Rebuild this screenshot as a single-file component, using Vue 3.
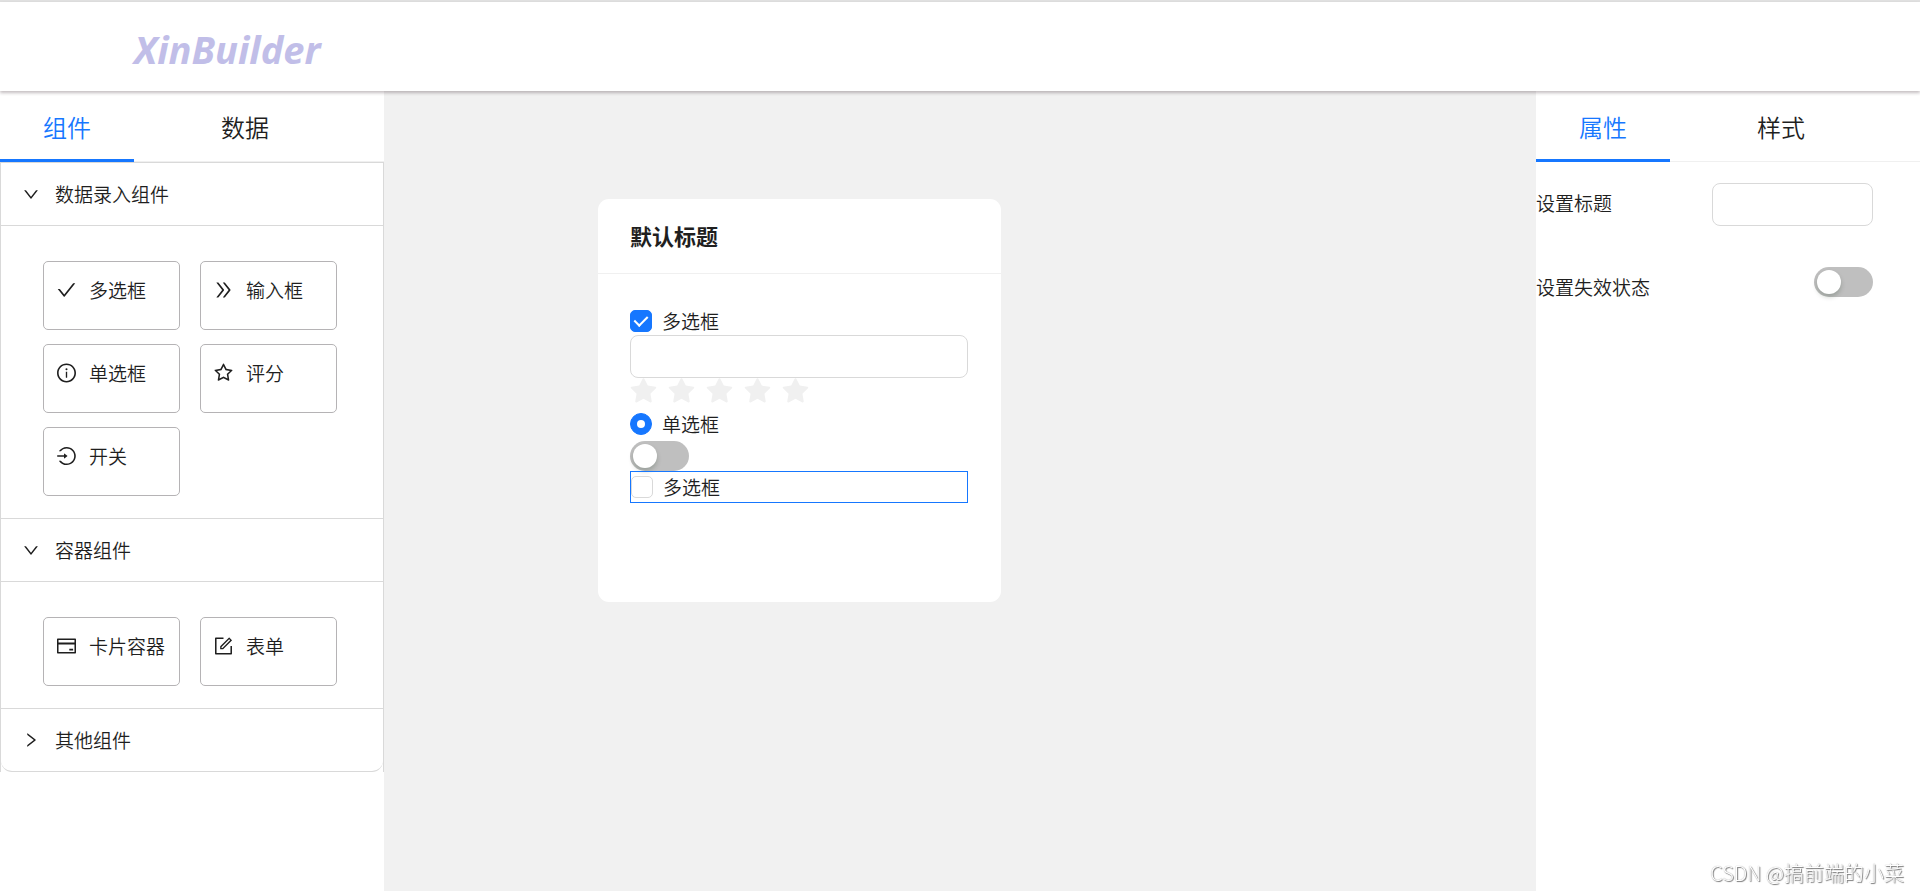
<script setup>
import { ref } from 'vue'

const icons = {
  check: ['M912 190h-69.9c-9.8 0-19.1 4.5-25.1 12.2L404.7 724.5 207 474a32 32 0 00-25.1-12.2H112c-6.7 0-10.4 7.7-6.3 12.9l273.9 347c12.8 16.2 37.4 16.2 50.3 0l488.4-618.9c4.1-5.1.4-12.8-6.3-12.8z'],
  doubleRight: ['M533.2 492.3L277.9 166.1c-3-3.9-7.7-6.1-12.6-6.1H188c-6.7 0-10.4 7.7-6.3 12.9L447.1 512 181.7 851.1A7.98 7.98 0 00188 864h77.3c4.9 0 9.6-2.3 12.6-6.1l255.3-326.1c9.1-11.7 9.1-27.9 0-39.5zm304 0L581.9 166.1c-3-3.9-7.7-6.1-12.6-6.1H492c-6.7 0-10.4 7.7-6.3 12.9L751.1 512 485.7 851.1A7.98 7.98 0 00492 864h77.3c4.9 0 9.6-2.3 12.6-6.1l255.3-326.1c9.1-11.7 9.1-27.9 0-39.5z'],
  info: [
    'M512 64C264.6 64 64 264.6 64 512s200.6 448 448 448 448-200.6 448-448S759.4 64 512 64zm0 820c-205.4 0-372-166.6-372-372s166.6-372 372-372 372 166.6 372 372-166.6 372-372 372z',
    'M464 336a48 48 0 1096 0 48 48 0 10-96 0zm72 112h-48c-4.4 0-8 3.6-8 8v272c0 4.4 3.6 8 8 8h48c4.4 0 8-3.6 8-8V456c0-4.4-3.6-8-8-8z'
  ],
  star: ['M908.1 353.1l-253.9-36.9L540.7 86.1c-3.1-6.3-8.2-11.4-14.5-14.5-15.8-7.8-35-1.3-42.9 14.5L369.8 316.2l-253.9 36.9c-7 1-13.4 4.3-18.3 9.3a32.05 32.05 0 00.6 45.3l183.7 179.1-43.4 252.9a31.95 31.95 0 0046.4 33.7L512 754l227.1 119.4c6.2 3.3 13.4 4.4 20.3 3.2 17.4-3 29.1-19.5 26.1-36.9l-43.4-252.9 183.7-179.1c5-4.9 8.3-11.3 9.3-18.3 2.7-17.5-9.5-33.7-27-36.3zM664.8 561.6l36.1 210.3L512 672.7 323.1 772l36.1-210.3-152.8-149L417.6 382 512 190.7 606.4 382l211.2 30.7-152.8 148.9z'],
  login: ['M521.7 82c-152.5-.4-286.7 78.5-363.4 197.7-3.4 5.3.4 12.3 6.7 12.3h70.3c4.8 0 9.3-2.1 12.3-5.8 7-8.5 14.5-16.7 22.4-24.5 32.6-32.5 70.5-58.1 112.7-75.9 43.6-18.4 90-27.8 137.9-27.8 47.9 0 94.3 9.3 137.9 27.8 42.2 17.8 80.1 43.4 112.7 75.9 32.6 32.5 58.1 70.4 76 112.5C865.7 417.8 875 464.1 875 512c0 47.9-9.4 94.2-27.8 137.8-17.8 42.1-43.4 80-76 112.5s-70.5 58.1-112.7 75.9A352.8 352.8 0 01520.6 866c-47.9 0-94.3-9.4-137.9-27.8A353.84 353.84 0 01270 762.3c-7.9-7.9-15.3-16.1-22.4-24.5-3-3.7-7.6-5.8-12.3-5.8H165c-6.3 0-10.2 7-6.7 12.3C234.9 863.2 368.5 942 520.6 942c236.2 0 428-190.1 430.4-425.6C953.4 277.1 761.3 82.6 521.7 82zM395.02 624v-76h-314c-4.4 0-8-3.6-8-8v-56c0-4.4 3.6-8 8-8h314v-76c0-6.7 7.8-10.5 13-6.3l141.9 112a8 8 0 010 12.6l-141.9 112c-5.2 4.1-13 .4-13-6.3z'],
  creditCard: ['M928 160H96c-17.7 0-32 14.3-32 32v640c0 17.7 14.3 32 32 32h832c17.7 0 32-14.3 32-32V192c0-17.7-14.3-32-32-32zm-792 72h752v120H136V232zm752 560H136V440h752v352zm-237-64h165c4.4 0 8-3.6 8-8v-72c0-4.4-3.6-8-8-8H651c-4.4 0-8 3.6-8 8v72c0 4.4 3.6 8 8 8z'],
  form: [
    'M904 512h-56c-4.4 0-8 3.6-8 8v320H184V184h320c4.4 0 8-3.6 8-8v-56c0-4.4-3.6-8-8-8H144c-17.7 0-32 14.3-32 32v736c0 17.7 14.3 32 32 32h736c17.7 0 32-14.3 32-32V520c0-4.4-3.6-8-8-8z',
    'M355.9 534.9L354 653.8c-.1 8.9 7.1 16.2 16 16.2h.4l118-2.9c2-.1 4-.9 5.4-2.3l415.9-415c3.1-3.1 3.1-8.2 0-11.3L785.4 114.3c-1.6-1.6-3.6-2.3-5.7-2.3s-4.1.8-5.7 2.3l-415.8 415a8.3 8.3 0 00-2.3 5.6zm63.5 23.6L779.7 199l45.2 45.1-360.5 359.7-45.7 1.1.7-46.4z'
  ]
}

const groups = ref([
  {
    key: 'entry',
    title: '数据录入组件',
    open: true,
    items: [
      { name: '多选框', icon: 'check' },
      { name: '输入框', icon: 'doubleRight' },
      { name: '单选框', icon: 'info' },
      { name: '评分', icon: 'star' },
      { name: '开关', icon: 'login' }
    ]
  },
  {
    key: 'container',
    title: '容器组件',
    open: true,
    items: [
      { name: '卡片容器', icon: 'creditCard' },
      { name: '表单', icon: 'form' }
    ]
  },
  { key: 'other', title: '其他组件', open: false, items: [] }
])

const leftTabs = ['组件', '数据']
const rightTabs = ['属性', '样式']
const leftTab = ref('组件')
const rightTab = ref('属性')

const checked = ref(true)
const checkedSecond = ref(false)
const radio = ref('on')
const text = ref('')
const rate = ref(0)
const switchOn = ref(false)

const title = ref('')
const disabled = ref(false)
</script>

<template>
  <div class="builder">
    <header class="builder-header">
      <h1 class="logo">XinBuilder</h1>
    </header>

    <div class="builder-body">
      <!-- Component palette -->
      <aside class="panel">
        <div class="tabs" role="tablist">
          <button
            v-for="tab in leftTabs"
            :key="tab"
            type="button"
            role="tab"
            class="tab"
            :class="{ 'tab--active': tab === leftTab }"
            :aria-selected="tab === leftTab"
            @click="leftTab = tab"
          >
            {{ tab }}
          </button>
        </div>

        <div class="collapse">
          <section v-for="group in groups" :key="group.key" class="collapse-item">
            <button
              type="button"
              class="collapse-header"
              :aria-expanded="group.open"
              @click="group.open = !group.open"
            >
              <svg
                class="arrow"
                :class="{ 'arrow--open': group.open }"
                viewBox="64 64 896 896"
                aria-hidden="true"
              >
                <path d="M765.7 486.8L314.9 134.7A7.97 7.97 0 00302 141v77.3c0 4.9 2.3 9.6 6.1 12.6l360 281.1-360 281.1c-3.9 3-6.1 7.7-6.1 12.6V883c0 6.7 7.7 10.4 12.9 6.3l450.8-352.1a31.96 31.96 0 000-50.4z" />
              </svg>
              <span>{{ group.title }}</span>
            </button>
            <div v-if="group.open" class="collapse-content">
              <button
                v-for="item in group.items"
                :key="item.name"
                type="button"
                class="component-item"
                draggable="true"
              >
                <svg class="icon" viewBox="64 64 896 896" aria-hidden="true">
                  <path v-for="d in icons[item.icon]" :key="d" :d="d" />
                </svg>
                <span>{{ item.name }}</span>
              </button>
            </div>
          </section>
        </div>
      </aside>

      <!-- Canvas -->
      <main class="canvas">
        <section class="card">
          <h2 class="card-title">默认标题</h2>
          <div class="card-body">
            <label class="field">
              <input v-model="checked" type="checkbox" class="checkbox" />
              <span>多选框</span>
            </label>
            <input v-model="text" type="text" class="text-input" aria-label="输入框" />
            <div class="rate">
              <button
                v-for="n in 5"
                :key="n"
                type="button"
                class="rate-star"
                :class="{ 'rate-star--on': n <= rate }"
                :aria-label="`评分 ${n}`"
                @click="rate = n"
              >
                <svg viewBox="64 64 896 896" aria-hidden="true">
                  <path d="M908.1 353.1l-253.9-36.9L540.7 86.1c-3.1-6.3-8.2-11.4-14.5-14.5-15.8-7.8-35-1.3-42.9 14.5L369.8 316.2l-253.9 36.9c-7 1-13.4 4.3-18.3 9.3a32.05 32.05 0 00.6 45.3l183.7 179.1-43.4 252.9a31.95 31.95 0 0046.4 33.7L512 754l227.1 119.4c6.2 3.3 13.4 4.4 20.3 3.2 17.4-3 29.1-19.5 26.1-36.9l-43.4-252.9 183.7-179.1c5-4.9 8.3-11.3 9.3-18.3 2.7-17.5-9.5-33.7-27-36.3z" />
                </svg>
              </button>
            </div>
            <label class="field">
              <input v-model="radio" type="radio" value="on" name="radio" class="radio" />
              <span>单选框</span>
            </label>
            <div class="switch-row">
              <input v-model="switchOn" type="checkbox" role="switch" class="switch" aria-label="开关" />
            </div>
            <label class="field field--selected">
              <input v-model="checkedSecond" type="checkbox" class="checkbox" />
              <span>多选框</span>
            </label>
          </div>
        </section>
      </main>

      <!-- Property settings -->
      <aside class="panel">
        <div class="tabs" role="tablist">
          <button
            v-for="tab in rightTabs"
            :key="tab"
            type="button"
            role="tab"
            class="tab"
            :class="{ 'tab--active': tab === rightTab }"
            :aria-selected="tab === rightTab"
            @click="rightTab = tab"
          >
            {{ tab }}
          </button>
        </div>
        <div class="settings">
          <div class="setting">
            <label for="setting-title">设置标题</label>
            <input id="setting-title" v-model="title" type="text" class="text-input" />
          </div>
          <div class="setting">
            <label for="setting-disabled">设置失效状态</label>
            <input id="setting-disabled" v-model="disabled" type="checkbox" role="switch" class="switch" />
          </div>
        </div>
      </aside>
    </div>

    <span class="watermark">CSDN @搞前端的小菜</span>
  </div>
</template>

<style>
body {
  margin: 0;
  background: #fff;
}
</style>

<style scoped>
.builder {
  min-height: 100vh;
  display: flex;
  flex-direction: column;
  box-sizing: border-box;
  border-top: 2px solid #e0e0e0;
  font-family: 'Noto Sans CJK SC', sans-serif;
  font-size: 19px;
  font-weight: 350;
  line-height: 30px;
  color: #1f1f1f;
}

.builder *,
.builder *::before {
  box-sizing: border-box;
}

button {
  padding: 0;
  border: 0;
  background: none;
  color: inherit;
  font: inherit;
  text-align: left;
  cursor: pointer;
}

input {
  margin: 0;
  font: inherit;
  color: inherit;
}

svg {
  display: block;
  fill: currentColor;
}

.builder-header {
  position: relative;
  z-index: 1;
  height: 89px;
  padding: 4px 134px 0;
  display: flex;
  align-items: center;
  background: #fff;
  box-shadow: 0 2px 3px rgba(60, 40, 50, 0.3);
}

.logo {
  margin: 0;
  font-family: 'Noto Sans', 'Noto Sans CJK SC', sans-serif;
  font-size: 38px;
  font-style: italic;
  font-weight: 700;
  line-height: 48px;
  color: #c1bee8;
}

.builder-body {
  flex: 1;
  display: grid;
  grid-template-columns: 1fr 3fr 1fr;
}

.panel {
  min-width: 0;
  background: #fff;
}

.tabs {
  display: flex;
  gap: 44px;
  height: 71px;
  border-bottom: 1px solid #f0f0f0;
}

.tab {
  padding: 3px 43px 0;
  height: 71px;
  font-size: 24px;
  line-height: 36px;
  border-bottom: 3px solid transparent;
}

.tab--active {
  color: #1677ff;
  border-bottom-color: #1677ff;
}

.collapse {
  border: 1px solid #d9d9d9;
  border-bottom: 0;
}

.collapse-item {
  border-bottom: 1px solid #d9d9d9;
}

.collapse-item:last-child {
  border-radius: 0 0 11px 11px;
}

.collapse-header {
  width: 100%;
  height: 62px;
  padding: 0 22px;
  display: flex;
  align-items: center;
  gap: 16px;
}

.arrow {
  width: 16px;
  height: 16px;
}

.arrow--open {
  transform: rotate(90deg);
}

.collapse-content {
  display: flex;
  flex-wrap: wrap;
  gap: 14px 20px;
  padding: 35px 42px 22px;
  border-top: 1px solid #d9d9d9;
}

.component-item {
  width: 137px;
  height: 69px;
  padding: 13px 0 0 13px;
  display: flex;
  align-items: flex-start;
  gap: 13px;
  border: 1px solid #b5b3b5;
  border-radius: 5px;
  white-space: nowrap;
}

.icon {
  width: 19px;
  height: 30px;
}

.canvas {
  padding: 108px 32px 32px 214px;
  background: #f1f1f1;
}

.card {
  width: 403px;
  min-height: 403px;
  background: #fff;
  border-radius: 11px;
}

.card-title {
  margin: 0;
  padding: 0 32px 2px;
  font-size: 22px;
  font-weight: 700;
  line-height: 72px;
  border-bottom: 1px solid #f0f0f0;
}

.card-body {
  display: flex;
  flex-direction: column;
  padding: 32px 33px 32px 32px;
}

.field {
  height: 29px;
  display: flex;
  align-items: center;
  gap: 10px;
}

.field--selected {
  height: 32px;
  border: 1px solid #1677ff;
}

.checkbox,
.radio {
  appearance: none;
  width: 22px;
  height: 22px;
  display: grid;
  place-content: center;
  border: 1px solid #d9d9d9;
  background: #fff;
}

.checkbox {
  border-radius: 5px;
}

.checkbox:checked {
  border-color: #1677ff;
  background: #1677ff;
}

.checkbox:checked::before {
  content: '';
  width: 8px;
  height: 13px;
  border: solid #fff;
  border-width: 0 2px 2px 0;
  transform: translateY(-1px) rotate(45deg);
}

.radio {
  border-radius: 50%;
}

.radio:checked {
  border-color: #1677ff;
  background: #1677ff;
}

.radio:checked::before {
  content: '';
  width: 8px;
  height: 8px;
  border-radius: 50%;
  background: #fff;
}

.text-input {
  width: 100%;
  height: 43px;
  padding: 0 14px;
  border: 1px solid #d9d9d9;
  border-radius: 8px;
  background: #fff;
  outline: none;
}

.text-input:focus {
  border-color: #1677ff;
}

.rate {
  display: flex;
  gap: 11px;
  height: 31px;
}

.rate-star {
  width: 27px;
  height: 27px;
  color: #f0f0f0;
}

.rate-star--on {
  color: #fadb14;
}

.switch-row {
  display: flex;
  padding-top: 3px;
}

.switch {
  appearance: none;
  width: 59px;
  height: 30px;
  padding: 3px;
  border-radius: 15px;
  background: #bfbfbf;
  cursor: pointer;
}

.switch::before {
  content: '';
  display: block;
  width: 24px;
  height: 24px;
  border-radius: 50%;
  background: #fff;
  box-shadow: 0 3px 5px rgba(0, 35, 11, 0.2);
}

.switch:checked {
  background: #1677ff;
}

.switch:checked::before {
  margin-left: auto;
}

.settings {
  display: flex;
  flex-direction: column;
  gap: 41px;
  padding: 21px 47px 0 0;
}

.setting {
  display: flex;
  align-items: flex-start;
  justify-content: space-between;
  line-height: 40px;
}

.setting .text-input {
  width: 161px;
}

.watermark {
  position: fixed;
  right: 16px;
  bottom: 3px;
  font-size: 20px;
  font-weight: 300;
  color: #fff;
  text-shadow: 1px 1px 1px #777, 0 0 1px #999;
}
</style>
